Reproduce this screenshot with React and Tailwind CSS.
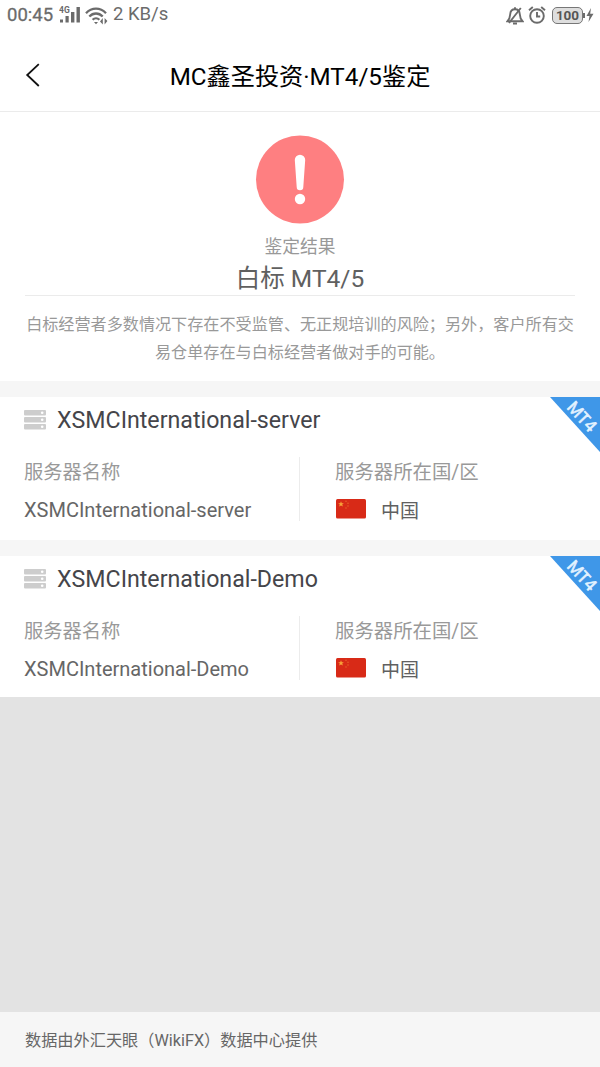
const servers = [
  { id: 1, name: "XSMCInternational-server", country: "中国", platform: "MT4" },
  { id: 2, name: "XSMCInternational-Demo", country: "中国", platform: "MT4" },
];

function StatusBar() {
  return (
    <div className="flex h-[31px] items-center justify-between pl-[7px] pr-[6px] text-[#6b6b6b]">
      <div className="flex items-center">
        <span className="w-[47px] whitespace-nowrap text-[18.5px] leading-[31px] [-webkit-text-stroke:0.3px]">00:45</span>

        {/* Signal */}
        <svg className="-mt-[2px] ml-[5px]" width="22" height="18" viewBox="0 0 22 18" fill="currentColor">
          <text x="0" y="7" fontSize="8.5" fontWeight="700">4G</text>
          <rect x="1" y="13.5" width="3" height="3" />
          <rect x="6.5" y="10" width="3.2" height="6.5" />
          <rect x="12" y="6" width="3.4" height="10.5" />
          <rect x="17.5" y="1" width="3.4" height="15.5" />
        </svg>

        {/* Wifi */}
        <svg className="ml-[4px]" width="24" height="18" viewBox="0 0 24 18" fill="none" stroke="currentColor" strokeWidth="2.3">
          <path d="M1 6.2C6.8 .2 15.2 .2 21 6.2" />
          <path d="M4.3 9.5c3.9-4 9.5-4 13.4 0" />
          <path d="M7.6 12.8c2-2 4.8-2 6.8 0" />
          <path d="M9 15h4l-2 2.3z" fill="currentColor" stroke="none" />
          <path d="M17.8 11v6.5L15 14.6zM19.6 17.5V11l2.8 3z" fill="currentColor" stroke="none" />
        </svg>
        <span className="-mt-[2px] ml-[4px] text-[18.5px] leading-[31px]">2 KB/s</span>
      </div>

      <div className="flex items-center">
        {/* Muted bell */}
        <svg className="-mt-[2px]" width="18" height="20" viewBox="0 0 18 20" fill="none" stroke="currentColor" strokeWidth="1.9">
          <path d="M1.5 16.2c1.7-1.8 2.5-3.5 2.7-7C4.4 6 6.2 4.2 9 4.2s4.6 1.8 4.8 5c.2 3.5 1 5.2 2.7 7z" />
          <path d="M9 2.2v2M7 18.5h4M14.8 3L3 18" />
        </svg>

        {/* Alarm */}
        <svg className="-mt-[2px] ml-[3px]" width="20" height="20" viewBox="0 0 20 20" fill="none" stroke="currentColor" strokeWidth="1.9">
          <circle cx="10" cy="11" r="6.8" />
          <path d="M10 7v4.5h3.2M2 5.2L5.8 2M18 5.2L14.2 2" />
        </svg>

        {/* Battery */}
        <div className="-mt-[1px] ml-[5px] flex h-[17px] w-[31px] items-center justify-center rounded-[5px] border-[1.5px] border-[#777] bg-[#dedede] pt-px text-[13.5px] font-bold leading-none text-[#555]">
          100
        </div>
        <svg className="-mt-[1px]" width="11" height="16" viewBox="0 0 11 16" fill="currentColor">
          <rect x="0" y="6" width="2" height="5" />
          <path d="M8 1L3.5 9h3L5.5 15 10.5 6.8H7.2z" />
        </svg>
      </div>
    </div>
  );
}

function Header() {
  return (
    <div className="flex h-[81px] items-center border-b border-[#ebebeb] px-6 pt-[10px]">
      <svg className="-mt-[2px]" width="18" height="26" viewBox="0 0 18 26" fill="none" stroke="#111" strokeWidth="1.8">
        <path d="M14.8 2.2L3.2 13l11.6 11" />
      </svg>
      <h1 className="flex-1 pr-[18px] pt-px text-center text-[24.2px] leading-[32px] text-black">
        MC鑫圣投资·MT4/5鉴定
      </h1>
    </div>
  );
}

function Result() {
  return (
    <div className="flex h-[269px] shrink-0 flex-col items-center px-[25px] pt-[22px]">
      <svg width="90" height="90" viewBox="0 0 90 90">
        <circle cx="45" cy="45.5" r="44" fill="#fe7f81" />
        <path d="M39.8 26a5 5 0 0 1 10.4 0L48.3 53a3.3 3.3 0 0 1-6.6 0z" fill="#fff" />
        <circle cx="45" cy="65" r="5.2" fill="#fff" />
      </svg>
      <p className="mt-[10px] text-[17.8px] leading-[26px] text-[#999]">鉴定结果</p>
      <p className="mt-[2px] flex h-[33px] items-center pt-px text-[24.5px] text-[#606060]">白标 MT4/5</p>
      <div className="h-px w-full shrink-0 bg-[#ebebeb]" />
      <p className="-mx-1 mt-[15px] text-center text-[16.12px] leading-[28px] text-[#999]">
        白标经营者多数情况下存在不受监管、无正规培训的风险；另外，客户所有交
        <br />
        易仓单存在与白标经营者做对手的可能。
      </p>
    </div>
  );
}

function ServerIcon() {
  return (
    <svg width="22" height="20" viewBox="0 0 22 20" fill="#cdcdcd">
      {[0, 7, 14].map((y) => (
        <g key={y}>
          <rect x="0" y={y} width="22" height="5.5" rx="1" />
          <circle cx="18.2" cy={y + 2.7} r="1.3" fill="#fff" />
        </g>
      ))}
    </svg>
  );
}

function ChinaFlag() {
  return (
    <svg className="-mt-[6px]" width="30" height="20" viewBox="0 0 30 20">
      <rect width="30" height="19.5" rx="1.5" fill="#d82a17" />
      <path d="M5 2.2l.8 2h2.1l-1.7 1.3.7 2.1L5 6.4 3.1 7.6l.7-2.100-1.700-1.300h2.100z" fill="#f8a43a" />
      <g fill="#e8692c">
        <circle cx="10" cy="2.3" r=".7" />
        <circle cx="12" cy="4.3" r=".7" />
        <circle cx="12" cy="7" r=".7" />
        <circle cx="10" cy="9" r=".7" />
      </g>
    </svg>
  );
}

function ServerCard({ server }) {
  return (
    <div className="relative h-[143px] shrink-0 overflow-hidden bg-white">
      {/* Corner ribbon */}
      <svg className="absolute right-0 top-0" width="50" height="55" viewBox="0 0 50 55">
        <path d="M0 0h50v55z" fill="#3f97e8" />
        <text
          transform="translate(32 19.5) rotate(47)"
          textAnchor="middle"
          dominantBaseline="central"
          fontSize="17"
          fill="#e3f2ff"
          stroke="#e3f2ff"
          strokeWidth="0.5"
        >
          {server.platform}
        </text>
      </svg>

      <div className="flex h-[45px] items-center gap-[11px] pl-6">
        <ServerIcon />
        <h2 className="pt-px text-[23.2px] text-[#45454a]">{server.name}</h2>
      </div>

      <div className="flex pl-6 pt-[15px]">
        <div className="h-[64px] w-[276px] border-r border-[#ececec]">
          <p className="flex h-[33px] items-center text-[19.3px] text-[#999]">服务器名称</p>
          <p className="mt-[6px] flex h-[28px] items-center text-[20px] text-[#666]">{server.name}</p>
        </div>
        <div className="pl-[35px]">
          <p className="flex h-[32px] items-center text-[19.4px] text-[#999]">服务器所在国/区</p>
          <div className="mt-[9px] flex h-[28px] items-center pl-[1px]">
            <ChinaFlag />
            <span className="ml-[15px] text-[19px] text-[#606060]">{server.country}</span>
          </div>
        </div>
      </div>
    </div>
  );
}

export default function App() {
  return (
    <div className="flex h-[1067px] w-[600px] flex-col overflow-hidden bg-white font-['Roboto','Noto_Sans_CJK_SC',sans-serif]">
      <StatusBar />
      <Header />
      <Result />

      <div className="flex h-[316px] shrink-0 flex-col gap-[16px] overflow-hidden border-t-[16px] border-[#f6f6f6] bg-[#f6f6f6]">
        {servers.map((server) => (
          <ServerCard key={server.id} server={server} />
        ))}
      </div>

      <div className="flex-1 bg-[#e3e3e3]" />

      <div className="flex h-[55px] shrink-0 items-center bg-[#f6f6f6] pl-[25px] pt-[3px] text-[16.2px] text-[#666]">
        数据由外汇天眼（WikiFX）数据中心提供
      </div>
    </div>
  );
}
